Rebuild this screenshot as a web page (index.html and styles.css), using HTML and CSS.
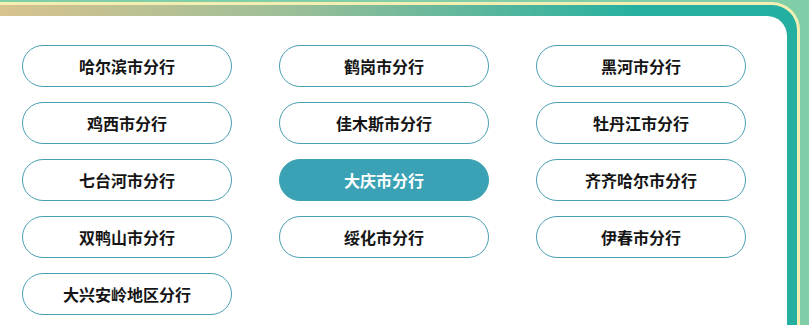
FILE: index.html
```html
<!DOCTYPE html>
<html lang="zh-CN">
<head>
<meta charset="utf-8">
<title>分行列表</title>
<link rel="stylesheet" href="styles.css">
</head>
<body>
<div class="frame">
  <div class="band">
    <div class="panel">
      <div class="grid">
        <div class="btn">哈尔滨市分行</div>
        <div class="btn">鹤岗市分行</div>
        <div class="btn">黑河市分行</div>
        <div class="btn">鸡西市分行</div>
        <div class="btn">佳木斯市分行</div>
        <div class="btn">牡丹江市分行</div>
        <div class="btn">七台河市分行</div>
        <div class="btn active">大庆市分行</div>
        <div class="btn">齐齐哈尔市分行</div>
        <div class="btn">双鸭山市分行</div>
        <div class="btn">绥化市分行</div>
        <div class="btn">伊春市分行</div>
        <div class="btn">大兴安岭地区分行</div>
      </div>
    </div>
  </div>
</div>
</body>
</html>
```

FILE: styles.css
```css
html, body {
  margin: 0;
  padding: 0;
  width: 809px;
  height: 325px;
  overflow: hidden;
  background: #7fcea8;
}
.frame {
  box-sizing: border-box;
  width: 809px;
  height: 325px;
  padding: 2px 9px 0 0;
  background: #7fcea8;
}
.band {
  box-sizing: border-box;
  height: 100%;
  border-top: 3px solid #f3efb3;
  border-right: 3px solid #f3efb3;
  border-radius: 0 28px 0 0;
  background: linear-gradient(90deg, #d8c38e 0%, #9fbf98 35%, #26b0a0 80%, #24b0a1 100%);
  padding: 11px 10px 0 0;
}
.panel {
  box-sizing: border-box;
  height: 100%;
  background: #ffffff;
  border-radius: 0 20px 0 0;
  padding: 29px 0 0 22px;
}
.grid {
  display: grid;
  grid-template-columns: repeat(3, 210px);
  column-gap: 47px;
  row-gap: 15px;
}
.btn {
  box-sizing: border-box;
  height: 42px;
  border: 1px solid #4b9fb3;
  border-radius: 21px;
  display: flex;
  align-items: center;
  justify-content: center;
  font-family: "Noto Sans CJK SC", "Noto Sans", sans-serif;
  font-weight: 700;
  font-size: 16px;
  color: #151515;
  background: #ffffff;
}
.btn.active {
  background: #3aa2b4;
  border-color: #3aa2b4;
  color: #ffffff;
}
```
